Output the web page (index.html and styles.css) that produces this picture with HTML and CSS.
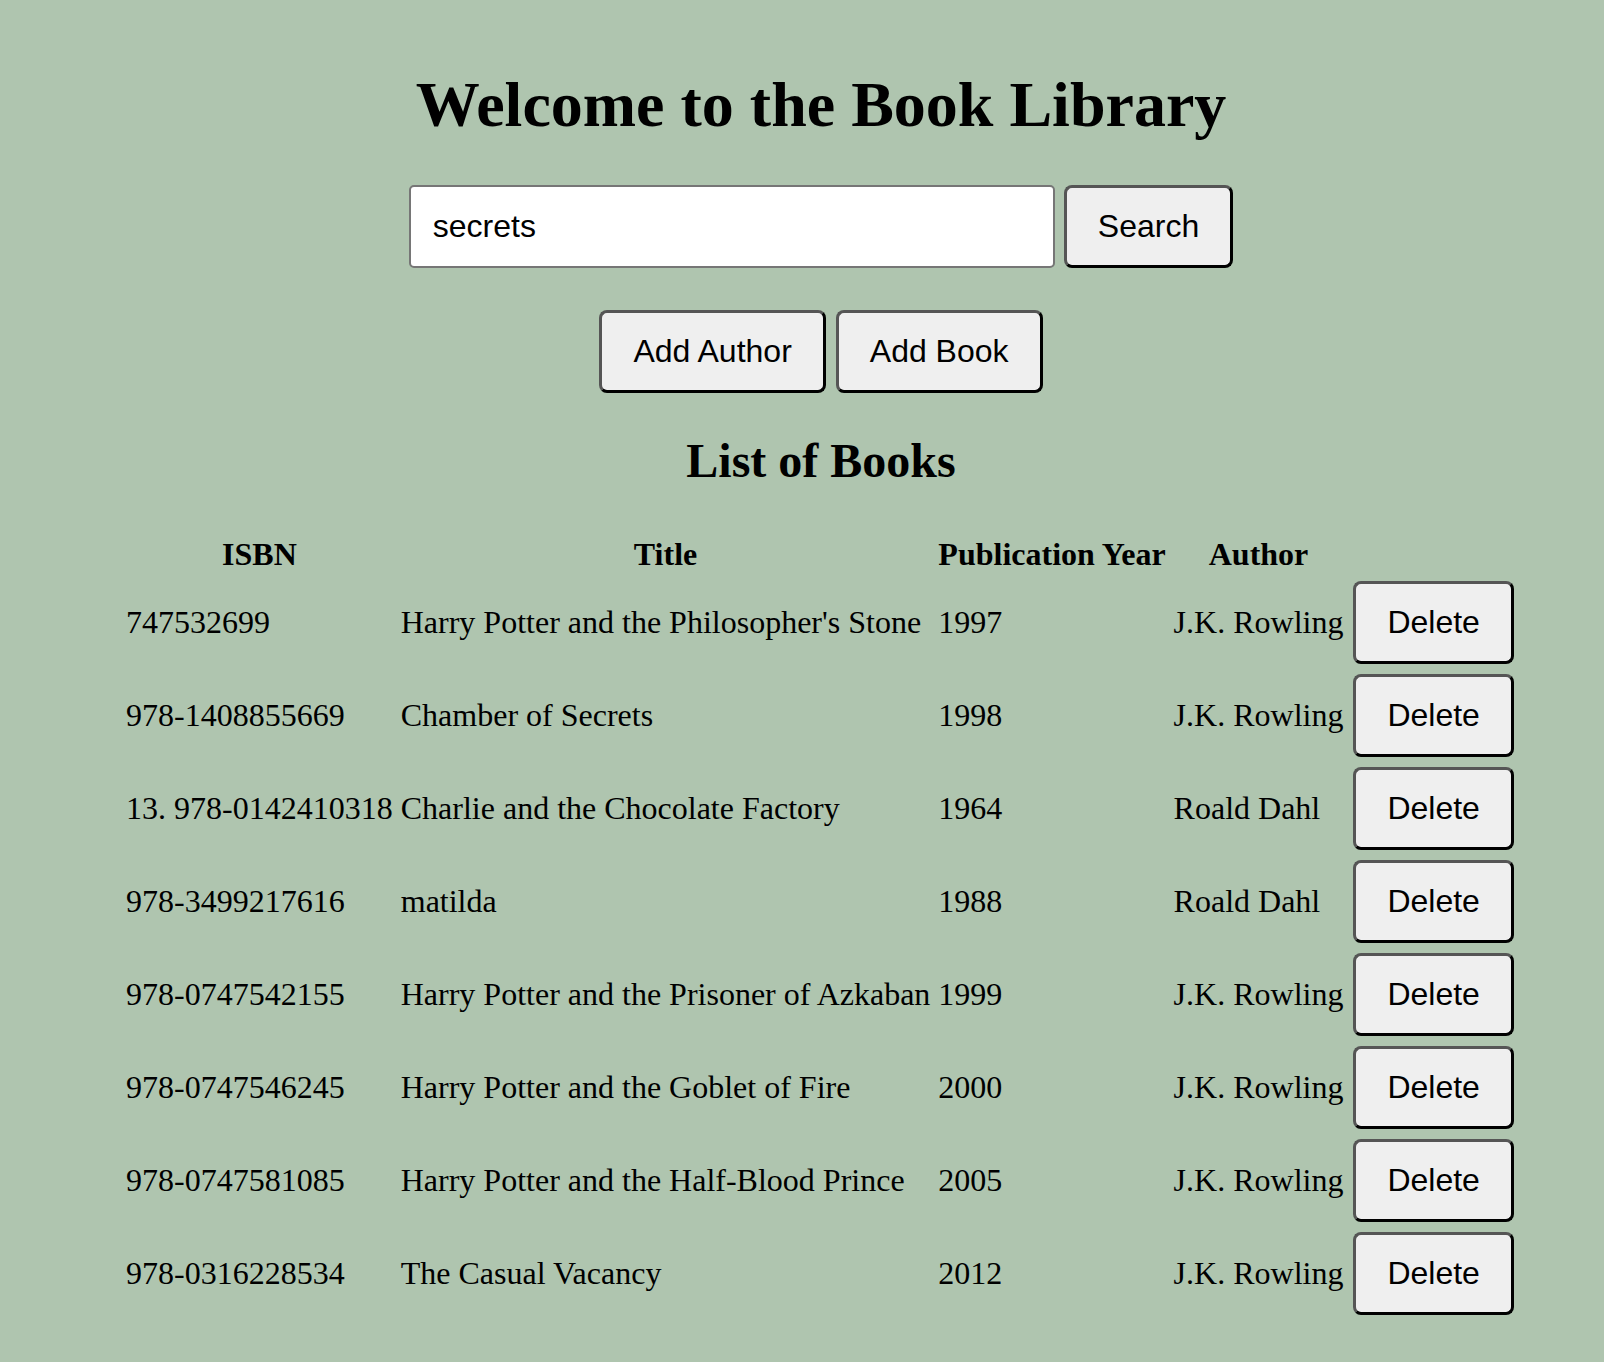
FILE: index.html
```html
<!DOCTYPE html>
<html lang="en">
<head>
<meta charset="utf-8">
<title>Book Library</title>
<link rel="stylesheet" href="styles.css">
</head>
<body>
<div class="page">
  <h1 class="title">Welcome to the Book Library</h1>
  <form class="search-row">
    <input class="search-input" type="text" value="secrets">
    <button class="btn" type="button">Search</button>
  </form>
  <div class="actions">
    <button class="btn" type="button">Add Author</button>
    <button class="btn" type="button">Add Book</button>
  </div>
  <h2 class="subtitle">List of Books</h2>
  <table class="books">
    <thead>
      <tr><th>ISBN</th><th>Title</th><th>Publication Year</th><th>Author</th><th></th></tr>
    </thead>
    <tbody>
      <tr><td>747532699</td><td>Harry Potter and the Philosopher's Stone</td><td>1997</td><td>J.K. Rowling</td><td><button class="btn btn-row" type="button">Delete</button></td></tr>
      <tr><td>978-1408855669</td><td>Chamber of Secrets</td><td>1998</td><td>J.K. Rowling</td><td><button class="btn btn-row" type="button">Delete</button></td></tr>
      <tr><td>13. 978-0142410318</td><td>Charlie and the Chocolate Factory</td><td>1964</td><td>Roald Dahl</td><td><button class="btn btn-row" type="button">Delete</button></td></tr>
      <tr><td>978-3499217616</td><td>matilda</td><td>1988</td><td>Roald Dahl</td><td><button class="btn btn-row" type="button">Delete</button></td></tr>
      <tr><td>978-0747542155</td><td>Harry Potter and the Prisoner of Azkaban</td><td>1999</td><td>J.K. Rowling</td><td><button class="btn btn-row" type="button">Delete</button></td></tr>
      <tr><td>978-0747546245</td><td>Harry Potter and the Goblet of Fire</td><td>2000</td><td>J.K. Rowling</td><td><button class="btn btn-row" type="button">Delete</button></td></tr>
      <tr><td>978-0747581085</td><td>Harry Potter and the Half-Blood Prince</td><td>2005</td><td>J.K. Rowling</td><td><button class="btn btn-row" type="button">Delete</button></td></tr>
      <tr><td>978-0316228534</td><td>The Casual Vacancy</td><td>2012</td><td>J.K. Rowling</td><td><button class="btn btn-row" type="button">Delete</button></td></tr>
    </tbody>
  </table>
</div>
</body>
</html>
```
FILE: styles.css
```css
html, body {
  margin: 0;
  background: #afc5af;
}

body {
  font-family: "Liberation Serif", "Times New Roman", serif;
  font-size: 32px;
  color: #000;
}

.page {
  padding: 25px 0 0 38px;
}

.title {
  font-size: 64px;
  font-weight: bold;
  line-height: normal;
  text-align: center;
  margin: 43px 0;
}

.search-row {
  display: flex;
  justify-content: center;
  gap: 9px;
  margin: 0;
}

.search-input {
  width: 646px;
  height: 83px;
  box-sizing: border-box;
  border: 2px solid #767676;
  border-radius: 5px;
  padding: 0 22px;
  margin: 0;
  background: #fff;
  color: #000;
  font-family: "Liberation Sans", Arial, sans-serif;
  font-size: 32px;
}

.btn {
  font-family: "Liberation Sans", Arial, sans-serif;
  font-size: 32px;
  line-height: normal;
  background: #efefef;
  color: #000;
  border: 3px solid;
  border-color: #555 #000 #000 #555;
  border-radius: 8px;
  padding: 20px 31px;
  margin: 0;
}

.actions {
  display: flex;
  justify-content: center;
  gap: 10px;
  margin-top: 42px;
}

.subtitle {
  font-size: 48px;
  font-weight: bold;
  line-height: normal;
  text-align: center;
  margin: 40px 0 43px;
}

.books {
  margin: 0 auto;
  border-spacing: 4px;
}

.books th,
.books td {
  padding: 1px 2px;
  line-height: normal;
}

.books th {
  font-weight: bold;
  text-align: center;
}

.books td {
  text-align: left;
  white-space: nowrap;
}

.btn-row {
  margin: 2px;
}
```
